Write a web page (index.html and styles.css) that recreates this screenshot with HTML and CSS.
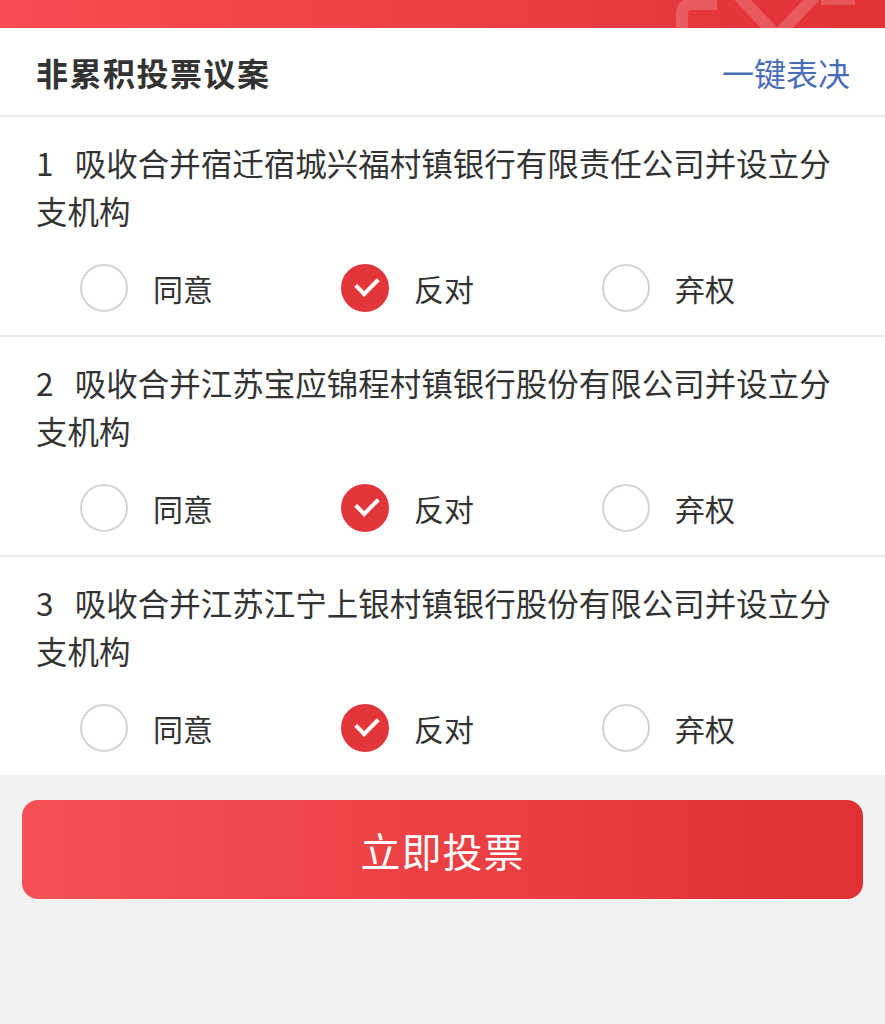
FILE: index.html
```html
<!DOCTYPE html>
<html lang="zh-CN">
<head>
    <meta charset="UTF-8">
    <meta name="viewport" content="width=device-width, initial-scale=1.0">
    <title>非累积投票议案</title>
    <link rel="stylesheet" href="styles.css">
</head>
<body>
    <div class="top-bar">
        <svg class="top-deco" width="220" height="28" viewBox="0 0 220 28">
            <path d="M47 34 V14 Q47 4 57 4 H82" fill="none" stroke="rgba(255,255,255,0.18)" stroke-width="12"/>
            <path d="M102 -6 L142 36 L182 -6" fill="none" stroke="rgba(255,255,255,0.18)" stroke-width="12"/>
            <path d="M186 0 H230" fill="none" stroke="rgba(255,255,255,0.18)" stroke-width="10"/>
        </svg>
    </div>

    <div class="panel">
        <header class="panel-head">
            <h1>非累积投票议案</h1>
            <a class="quick-vote">一键表决</a>
        </header>

        <section class="motion">
            <p class="motion-title">1&nbsp;&nbsp;&nbsp;吸收合并宿迁宿城兴福村镇银行有限责任公司并设立分支机构</p>
            <div class="choices">
                <label class="choice"><span class="radio"></span>同意</label>
                <label class="choice"><span class="radio checked"></span>反对</label>
                <label class="choice"><span class="radio"></span>弃权</label>
            </div>
        </section>

        <section class="motion">
            <p class="motion-title">2&nbsp;&nbsp;&nbsp;吸收合并江苏宝应锦程村镇银行股份有限公司并设立分支机构</p>
            <div class="choices">
                <label class="choice"><span class="radio"></span>同意</label>
                <label class="choice"><span class="radio checked"></span>反对</label>
                <label class="choice"><span class="radio"></span>弃权</label>
            </div>
        </section>

        <section class="motion">
            <p class="motion-title">3&nbsp;&nbsp;&nbsp;吸收合并江苏江宁上银村镇银行股份有限公司并设立分支机构</p>
            <div class="choices">
                <label class="choice"><span class="radio"></span>同意</label>
                <label class="choice"><span class="radio checked"></span>反对</label>
                <label class="choice"><span class="radio"></span>弃权</label>
            </div>
        </section>
    </div>

    <div class="footer">
        <button class="vote-btn">立即投票</button>
    </div>
</body>
</html>
```

FILE: styles.css
```css
body {
    margin: 0;
    padding: 0;
    background: #f2f2f2;
    font-family: "Noto Sans CJK SC", "Noto Sans", sans-serif;
    color: #333;
}

.top-bar {
    height: 28px;
    background: linear-gradient(90deg, #f54d51, #e13236);
    position: relative;
    overflow: hidden;
}

.top-deco {
    position: absolute;
    top: 0;
    left: 635px;
}

.panel {
    background: #fff;
}

.panel-head {
    height: 87px;
    display: flex;
    justify-content: space-between;
    align-items: center;
    padding: 0 35px 0 36px;
    border-bottom: 2px solid #ececec;
}

.panel-head h1 {
    margin: 0;
    font-size: 32px;
    font-weight: 700;
    letter-spacing: 1.5px;
    color: #333;
}

.quick-vote {
    font-size: 32px;
    color: #4a6db8;
}

.motion {
    padding: 21px 36px 23px 36px;
    border-bottom: 2px solid #ececec;
}

.motion:last-child {
    border-bottom: none;
}

.motion-title {
    margin: 0;
    font-size: 31.5px;
    line-height: 48px;
    height: 96px;
}

.choices {
    display: grid;
    grid-template-columns: repeat(3, 261px);
    margin-top: 30px;
    padding-left: 44px;
}

.choice {
    display: flex;
    align-items: center;
    gap: 25px;
    font-size: 30px;
    height: 48px;
}

.radio {
    width: 44px;
    height: 44px;
    border: 2px solid #d4d4d4;
    border-radius: 50%;
    box-sizing: content-box;
    position: relative;
}

.radio.checked {
    background: #e2363b;
    border-color: #e2363b;
}

.radio.checked::after {
    content: "";
    position: absolute;
    left: 13px;
    top: 11px;
    width: 18px;
    height: 10px;
    border-left: 4px solid #fff;
    border-bottom: 4px solid #fff;
    transform: rotate(-45deg);
}

.footer {
    padding: 25px 22px;
}

.vote-btn {
    display: block;
    width: 100%;
    height: 99px;
    border: none;
    border-radius: 16px;
    background: linear-gradient(90deg, #f55155, #e03034);
    color: #fff;
    font-family: "Noto Sans CJK SC", sans-serif;
    font-size: 40px;
    font-weight: 400;
    letter-spacing: 1px;
}
```
